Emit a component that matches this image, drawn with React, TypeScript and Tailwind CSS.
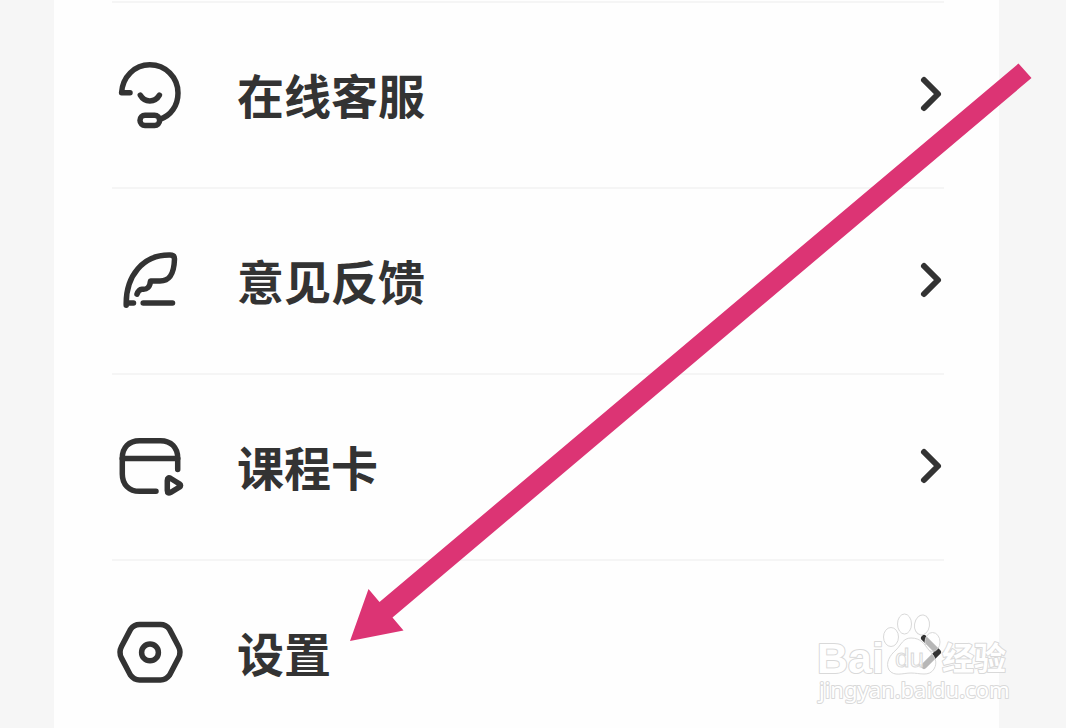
import type { ReactNode } from "react";

function Icon({ children }: { children: ReactNode }) {
  return (
    <svg
      viewBox="0 0 80 80"
      className="size-20 shrink-0"
      fill="none"
      stroke="currentColor"
      strokeWidth="5.5"
      strokeLinecap="round"
      strokeLinejoin="round"
      aria-hidden="true"
    >
      {children}
    </svg>
  );
}

const items: { label: string; icon: ReactNode }[] = [
  {
    label: "在线客服",
    icon: (
      <Icon>
        <path d="M20 37.7H11.6C12.5 22 24.5 9.8 39.8 9.8C55.5 9.8 68 22.3 68 38C68 50.5 61 60.5 50 64.3" />
        <path d="M30.3 40.2C34.5 47.8 45.2 47.8 49.4 40.2" />
        <rect x="30" y="60.2" width="19.6" height="10.4" rx="5" />
      </Icon>
    ),
  },
  {
    label: "意见反馈",
    icon: (
      <Icon>
        <path d="M23.5 62H16.2V64.3C15.5 35 33 13.5 60 14Q64.5 14 64.5 18C64 34 59 40 50 40H40.5C40 46 37 49 32 48.2Q28.5 48.5 27 53.2" />
        <path d="M33.2 62H62.5" />
      </Icon>
    ),
  },
  {
    label: "课程卡",
    icon: (
      <Icon>
        <path d="M67.7 42.5V31C67.7 20.5 61 13.7 50.5 13.7H29.5C19 13.7 12.3 20.5 12.3 31V47C12.3 57.5 19 64.3 29.5 64.3H46" />
        <path d="M12.3 31.4H67.7" />
        <path d="M57.3 53.5Q57.3 49.6 60.8 51.5L69.4 56.8Q71.8 58.5 69.4 60.2L60.8 65.4Q57.3 67.4 57.3 63.5Z" />
      </Icon>
    ),
  },
  {
    label: "设置",
    icon: (
      <Icon>
        <path d="M29.5 11.6H50.5Q56 11.6 59.5 16.4L68.5 33.5Q71.5 39.3 68.5 45.1L59.5 62.2Q56 67 50.5 67H29.5Q24 67 20.5 62.2L11.5 45.1Q8.5 39.3 11.5 33.5L20.5 16.4Q24 11.6 29.5 11.6Z" />
        <circle cx="40" cy="39.4" r="8.4" />
      </Icon>
    ),
  },
];

function Chevron() {
  return (
    <svg
      viewBox="0 0 28 40"
      className="h-10 w-7 shrink-0"
      fill="none"
      stroke="currentColor"
      strokeWidth="6"
      strokeLinecap="round"
      strokeLinejoin="round"
      aria-hidden="true"
    >
      <path d="M8 5L22 19L8 33" />
    </svg>
  );
}

function Arrow() {
  return (
    <svg
      viewBox="0 0 682 578"
      className="pointer-events-none absolute left-[350px] top-[63px] h-[578px] w-[682px]"
      aria-hidden="true"
    >
      <path
        d="M668.5 0.5L681.5 15L42.5 554.5L53.5 567.5L0 578L18.5 526L29.5 539Z"
        fill="#dc3474"
      />
    </svg>
  );
}

function Watermark() {
  return (
    <svg
      viewBox="0 0 200 100"
      className="pointer-events-none absolute left-[814px] top-[608px] h-[100px] w-[200px]"
      fill="#ffffff"
      stroke="#d9d9d9"
      strokeWidth="1"
      role="img"
      aria-label="Baidu 经验 jingyan.baidu.com"
    >
      <g fillOpacity="0.65">
        <ellipse cx="77" cy="29" rx="7.5" ry="9.5" />
        <ellipse cx="90.5" cy="16" rx="7" ry="10" />
        <ellipse cx="108" cy="17" rx="7.5" ry="10" transform="rotate(8 108 17)" />
        <ellipse cx="118.5" cy="34" rx="7.5" ry="9.5" />
        <path d="M97 30C107 30 110 36 115 42C121 49 124 54 120 61C115 69 106 65 97 65C89 65 80 69 75 62C71 55 76 47 82 42C87 37 89 30 97 30Z" />
        <text
          x="81"
          y="59"
          fontSize="26"
          className="font-['Liberation_Sans',sans-serif] font-normal"
        >
          du
        </text>
      </g>
      <g strokeWidth="2" strokeLinejoin="round" paintOrder="stroke">
        <text
          x="3"
          y="65"
          fontSize="43"
          className="font-['Liberation_Sans',sans-serif] font-bold"
        >
          Bai
        </text>
        <text
          x="128"
          y="62"
          fontSize="32"
          className="font-['Noto_Sans_CJK_SC',sans-serif] font-bold"
        >
          经验
        </text>
        <text
          x="5"
          y="90"
          fontSize="22"
          className="font-['Noto_Sans',sans-serif] font-normal"
        >
          jingyan.baidu.com
        </text>
      </g>
    </svg>
  );
}

export default function App() {
  return (
    <div className="relative h-screen overflow-hidden bg-[#f6f6f6] pl-[54px] pr-[67px] font-['Noto_Sans_CJK_SC',sans-serif] text-[#333333]">
      <main className="min-h-full bg-[#fefefe] pt-px pl-[58px] pr-[55px]">
        <ul>
          {items.map((item) => (
            <li key={item.label} className="border-t-2 border-[#f5f5f5]">
              <button
                type="button"
                className="flex h-46 w-full items-center text-left"
              >
                <span className="-ml-0.5 flex">{item.icon}</span>
                <span className="ml-[47px] grow pb-1 text-[47px] leading-none font-bold">
                  {item.label}
                </span>
                <Chevron />
              </button>
            </li>
          ))}
        </ul>
      </main>
      <Arrow />
      <Watermark />
    </div>
  );
}
